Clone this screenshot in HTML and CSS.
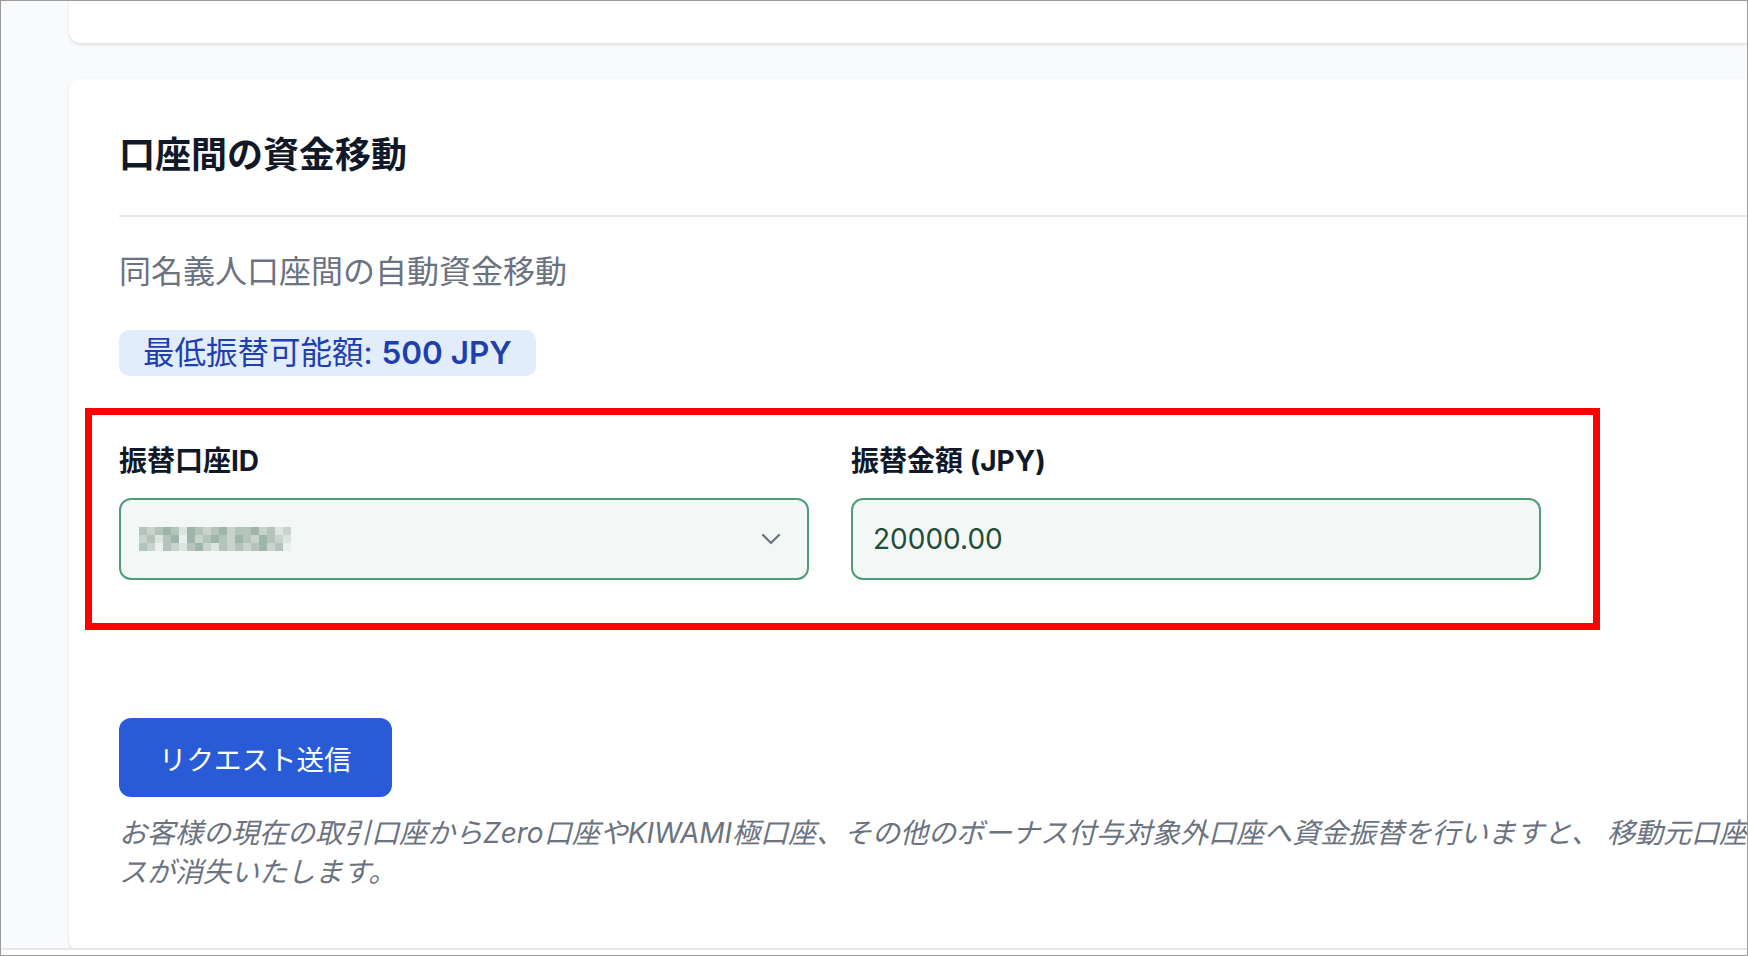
FILE: index.html
```html
<!DOCTYPE html>
<html lang="ja">
<head>
	<meta charset="UTF-8">
	<title>口座間の資金移動</title>
	<link rel="stylesheet" href="styles.css">
</head>
<body>
	<div class="frame">
		<div class="main">
			<div class="card card-top"></div>
			<div class="card">
				<h2 class="card-title">口座間の資金移動</h2>
				<hr class="divider">
				<p class="subtitle">同名義人口座間の自動資金移動</p>
				<div class="badge-row"><span class="badge">最低振替可能額: <strong>500 JPY</strong></span></div>
				<div class="form-row">
					<div class="field">
						<label class="label">振替口座ID</label>
						<div class="control select">
							<svg class="mosaic" width="152" height="24" viewBox="0 0 152 24">
								<g fill="#b4c4bc">
									<rect x="0" y="0" width="8" height="8"/><rect x="16" y="0" width="8" height="8"/><rect x="32" y="0" width="8" height="8"/><rect x="56" y="0" width="8" height="8"/><rect x="72" y="0" width="8" height="8"/><rect x="96" y="0" width="8" height="8"/><rect x="104" y="0" width="8" height="8"/><rect x="128" y="0" width="8" height="8"/>
									<rect x="8" y="8" width="8" height="8"/><rect x="24" y="8" width="8" height="8"/><rect x="64" y="8" width="8" height="8"/><rect x="80" y="8" width="8" height="8"/><rect x="104" y="8" width="8" height="8"/><rect x="128" y="8" width="8" height="8"/>
									<rect x="0" y="16" width="8" height="16"/><rect x="24" y="16" width="8" height="8"/><rect x="48" y="16" width="8" height="8"/><rect x="80" y="16" width="8" height="8"/><rect x="96" y="16" width="8" height="8"/><rect x="112" y="16" width="8" height="8"/><rect x="136" y="16" width="8" height="8"/>
								</g>
								<g fill="#c8d3ce">
									<rect x="8" y="0" width="8" height="8"/><rect x="64" y="0" width="8" height="8"/><rect x="88" y="0" width="8" height="8"/><rect x="120" y="0" width="8" height="8"/><rect x="144" y="0" width="8" height="8"/>
									<rect x="0" y="8" width="8" height="8"/><rect x="56" y="8" width="8" height="8"/><rect x="88" y="8" width="8" height="8"/><rect x="112" y="8" width="8" height="8"/><rect x="136" y="8" width="8" height="8"/>
									<rect x="8" y="16" width="8" height="8"/><rect x="32" y="16" width="8" height="8"/><rect x="64" y="16" width="8" height="8"/><rect x="88" y="16" width="8" height="8"/><rect x="104" y="16" width="8" height="8"/><rect x="128" y="16" width="8" height="8"/>
								</g>
								<g fill="#9fb4aa">
									<rect x="24" y="0" width="8" height="8"/><rect x="48" y="0" width="8" height="8"/><rect x="80" y="0" width="8" height="8"/><rect x="112" y="0" width="8" height="8"/>
									<rect x="32" y="8" width="8" height="8"/><rect x="48" y="8" width="8" height="8"/><rect x="72" y="8" width="8" height="8"/><rect x="96" y="8" width="8" height="8"/><rect x="120" y="8" width="8" height="8"/>
									<rect x="56" y="16" width="8" height="8"/><rect x="120" y="16" width="8" height="8"/>
								</g>
								<g fill="#dce4e0">
									<rect x="40" y="0" width="8" height="8"/><rect x="136" y="0" width="8" height="8"/>
									<rect x="16" y="8" width="8" height="8"/><rect x="144" y="8" width="8" height="8"/>
									<rect x="40" y="16" width="8" height="8"/><rect x="72" y="16" width="8" height="8"/>
								</g>
								<g fill="#eaf0ed">
									<rect x="40" y="8" width="8" height="8"/><rect x="16" y="16" width="8" height="8"/><rect x="144" y="16" width="8" height="8"/>
								</g>
							</svg>
							<svg class="chevron" width="20" height="12" viewBox="0 0 20 12">
								<path d="M2 2l8 8 8-8" fill="none" stroke="#6b7280" stroke-width="2.2" stroke-linecap="round" stroke-linejoin="round"/>
							</svg>
						</div>
					</div>
					<div class="field">
						<label class="label">振替金額 (JPY)</label>
						<div class="control input">20000.00</div>
					</div>
					<div class="highlight"></div>
				</div>
				<button class="submit">リクエスト送信</button>
				<p class="note">お客様の現在の取引口座からZero口座やKIWAMI極口座、その他のボーナス付与対象外口座へ資金振替を行いますと、 移動元口座のボーナスが消失いたします。</p>
			</div>
		</div>
		<div class="footer"></div>
	</div>
</body>
</html>
```

FILE: styles.css
```css
*{
	padding: 0;
	margin: 0;
	box-sizing: border-box;
}
body{
	font-family: Inter, "Noto Sans CJK JP", sans-serif;
	background: #fff;
}
.frame{
	width: 1748px;
	height: 956px;
	border: 1px solid #9b9b9b;
	overflow: hidden;
	background: #f9fafb;
	display: flex;
	flex-direction: column;
}
.main{
	flex: 1;
	overflow: hidden;
	padding-left: 68px;
}
.card{
	width: 1855px;
	background: #fff;
	border-radius: 12px;
	box-shadow: 0 1px 3px rgba(0,0,0,.08), 0 1px 2px rgba(0,0,0,.04);
	padding: 51px 50px 60px;
	margin-top: 35px;
}
.card-top{
	height: 43px;
	margin-top: 0;
	padding: 0;
	border-radius: 0 0 12px 12px;
	border-bottom: 1px solid #e6e7ea;
}
.card-title{
	font-size: 36px;
	font-weight: 700;
	line-height: 50px;
	color: #111827;
}
.divider{
	border: 0;
	border-top: 2px solid #e5e7eb;
	margin-top: 35px;
}
.subtitle{
	font-size: 32px;
	line-height: 44px;
	margin-top: 33px;
	color: #6b7280;
}
.badge-row{
	margin-top: 36px;
}
.badge{
	display: inline-block;
	height: 46px;
	line-height: 46px;
	padding: 0 24px;
	background: #e2edfc;
	color: #1e40af;
	font-size: 31.5px;
	border-radius: 10px;
}
.badge strong{
	font-weight: 600;
}
.form-row{
	position: relative;
	width: 1422px;
	display: grid;
	grid-template-columns: 690px 690px;
	gap: 42px;
	margin-top: 67px;
}
.label{
	display: block;
	font-size: 28px;
	font-weight: 700;
	line-height: 36px;
	margin-bottom: 19px;
	color: #111827;
}
.control{
	height: 82px;
	border: 2px solid #4f9d76;
	border-radius: 12px;
	background: #f3f8f6;
	display: flex;
	align-items: center;
}
.select{
	justify-content: space-between;
	padding: 0 26px 0 18px;
}
.mosaic{
	display: block;
}
.input{
	padding-left: 20px;
	font-size: 28px;
	color: #1f4d3b;
}
.highlight{
	position: absolute;
	left: -34px;
	top: -35px;
	right: -59px;
	bottom: -50px;
	border: 7px solid #ff0000;
	pointer-events: none;
}
.submit{
	display: block;
	margin-top: 138px;
	height: 79px;
	padding: 0 40px;
	border: 0;
	border-radius: 12px;
	background: #2a5bd7;
	color: #fff;
	font-family: inherit;
	font-size: 27.5px;
}
.note{
	width: 1755px;
	margin-top: 17px;
	font-size: 28px;
	line-height: 39px;
	font-style: italic;
	color: #6b7280;
}
.footer{
	height: 7px;
	flex: none;
	background: #fff;
	border-top: 2px solid #e5e7eb;
}
```
